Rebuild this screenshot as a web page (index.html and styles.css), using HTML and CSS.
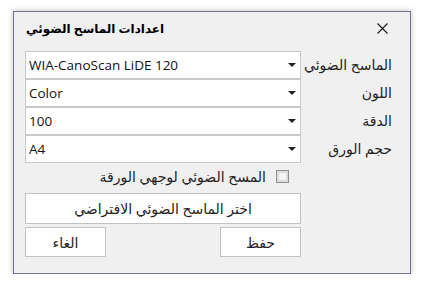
FILE: index.html
```html
<!DOCTYPE html>
<html lang="ar">
<head>
  <meta charset="UTF-8" />
  <title>اعدادات الماسح الضوئي</title>
  <link rel="stylesheet" href="styles.css">
</head>
<body>

<div class="dialog">
  <div class="title-bar">
    <span class="title">اعدادات الماسح الضوئي</span>
    <svg class="close" width="11" height="11" viewBox="0 0 11 11">
      <path d="M0.5 0.5 L10.5 10.5 M10.5 0.5 L0.5 10.5" stroke="#1a1a1a" stroke-width="1.1" fill="none"/>
    </svg>
  </div>

  <div class="form">
    <div class="combo"><span>WIA-CanoScan LiDE 120</span><i class="arrow"></i></div>
    <label class="field-label">الماسح الضوئي</label>

    <div class="combo"><span>Color</span><i class="arrow"></i></div>
    <label class="field-label">اللون</label>

    <div class="combo"><span>100</span><i class="arrow"></i></div>
    <label class="field-label">الدقة</label>

    <div class="combo"><span>A4</span><i class="arrow"></i></div>
    <label class="field-label">حجم الورق</label>
  </div>

  <div class="check-row">
    <span class="check-text">المسح الضوئي لوجهي الورقة</span>
    <span class="checkbox"></span>
  </div>

  <button class="btn btn-wide">اختر الماسح الضوئي الافتراضي</button>

  <div class="actions">
    <button class="btn btn-small">الغاء</button>
    <button class="btn btn-small">حفظ</button>
  </div>
</div>

</body>
</html>
```

FILE: styles.css
```css
* {
  margin: 0;
  padding: 0;
  box-sizing: border-box;
  font-family: 'Open Sans', 'DejaVu Sans', sans-serif;
}

body {
  background: #ffffff;
  color: #000;
}

.dialog {
  width: 398px;
  height: 263px;
  margin: 11px 0 0 13px;
  background: #f0f0f0;
  border: 1px solid #6f7690;
  box-shadow: 0 0 6px rgba(0, 0, 0, 0.25);
  padding: 0 18px 0 11px;
}

.title-bar {
  height: 32px;
  display: flex;
  align-items: center;
  justify-content: space-between;
}

.title {
  font-size: 12px;
  font-weight: bold;
  padding-left: 1px;
}

.close {
  margin-right: 4px;
}

.form {
  margin-top: 7px;
  display: grid;
  grid-template-columns: 276px 1fr;
  grid-auto-rows: 28px;
}

.combo {
  background: #fff;
  border: 1px solid #c9c9c9;
  display: flex;
  align-items: center;
  justify-content: space-between;
  padding: 0 4px 0 3px;
  font-size: 13.5px;
  color: #111;
}

.arrow {
  width: 0;
  height: 0;
  border-left: 4px solid transparent;
  border-right: 4px solid transparent;
  border-top: 4px solid #222;
}

.field-label {
  text-align: right;
  font-size: 14px;
  line-height: 28px;
  color: #222;
}

.check-row {
  width: 276px;
  height: 27px;
  display: flex;
  align-items: center;
  justify-content: flex-end;
  gap: 10px;
  padding-right: 12px;
}

.check-text {
  font-size: 14px;
  color: #222;
}

.checkbox {
  width: 13px;
  height: 13px;
  border: 1px solid #8f8f8f;
  background: #f4f4f4;
  box-shadow: inset 0 0 0 2px #dcdcdc;
}

.btn {
  display: flex;
  align-items: center;
  justify-content: center;
  background: #fff;
  border: 1px solid #c2c2c2;
  font-size: 14px;
  color: #222;
}

.btn-wide {
  width: 276px;
  height: 31px;
  margin-top: 3px;
}

.actions {
  width: 276px;
  display: flex;
  justify-content: space-between;
  margin-top: 3px;
}

.btn-small {
  width: 81px;
  height: 30px;
}
```
